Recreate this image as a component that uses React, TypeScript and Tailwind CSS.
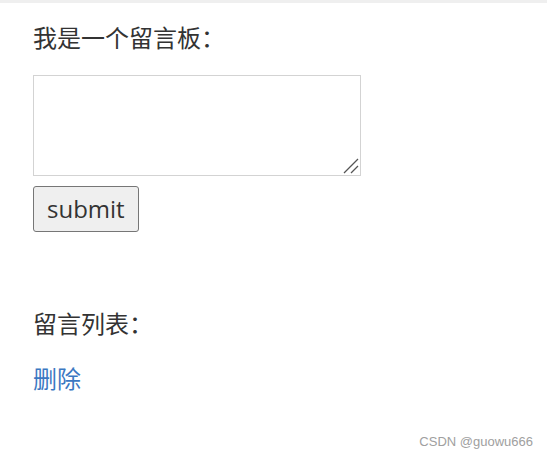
export default function App() {
  return (
    <div className="relative h-[459px] w-[547px] overflow-hidden bg-white font-['Open_Sans','Noto_Sans_CJK_SC',sans-serif] text-[#333]">
      <div className="h-[3px] bg-[#efefef]" />
      <div className="flex flex-col items-start pl-[33px]">
        <h3 className="mt-[17px] text-[24px] leading-[36px] font-normal">我是一个留言板：</h3>
        <div className="relative mt-[19px]">
          <textarea className="block h-[101px] w-[328px] resize-none border border-[#d3d3d3] bg-white" />
          <svg className="pointer-events-none absolute right-[2px] bottom-[2px]" width="16" height="16" viewBox="0 0 16 16">
            <path d="M1 15 L15 1 M8 15 L15 8" stroke="#555" strokeWidth="1.3" fill="none" />
          </svg>
        </div>
        <button className="mt-[10px] h-[46px] rounded-[3px] border border-[#767676] bg-[#efefef] px-[13px] text-[24px] leading-none text-[#333]">
          submit
        </button>
        <h3 className="mt-[74px] text-[24px] leading-[36px] font-normal">留言列表：</h3>
        <a href="#" className="mt-[19px] text-[24px] leading-[36px] text-[#3b78c2]">
          删除
        </a>
      </div>
      <div className="absolute right-[14px] bottom-[8px] font-['Liberation_Sans',sans-serif] text-[13px] text-[#a0a0a0]">
        CSDN @guowu666
      </div>
    </div>
  );
}
